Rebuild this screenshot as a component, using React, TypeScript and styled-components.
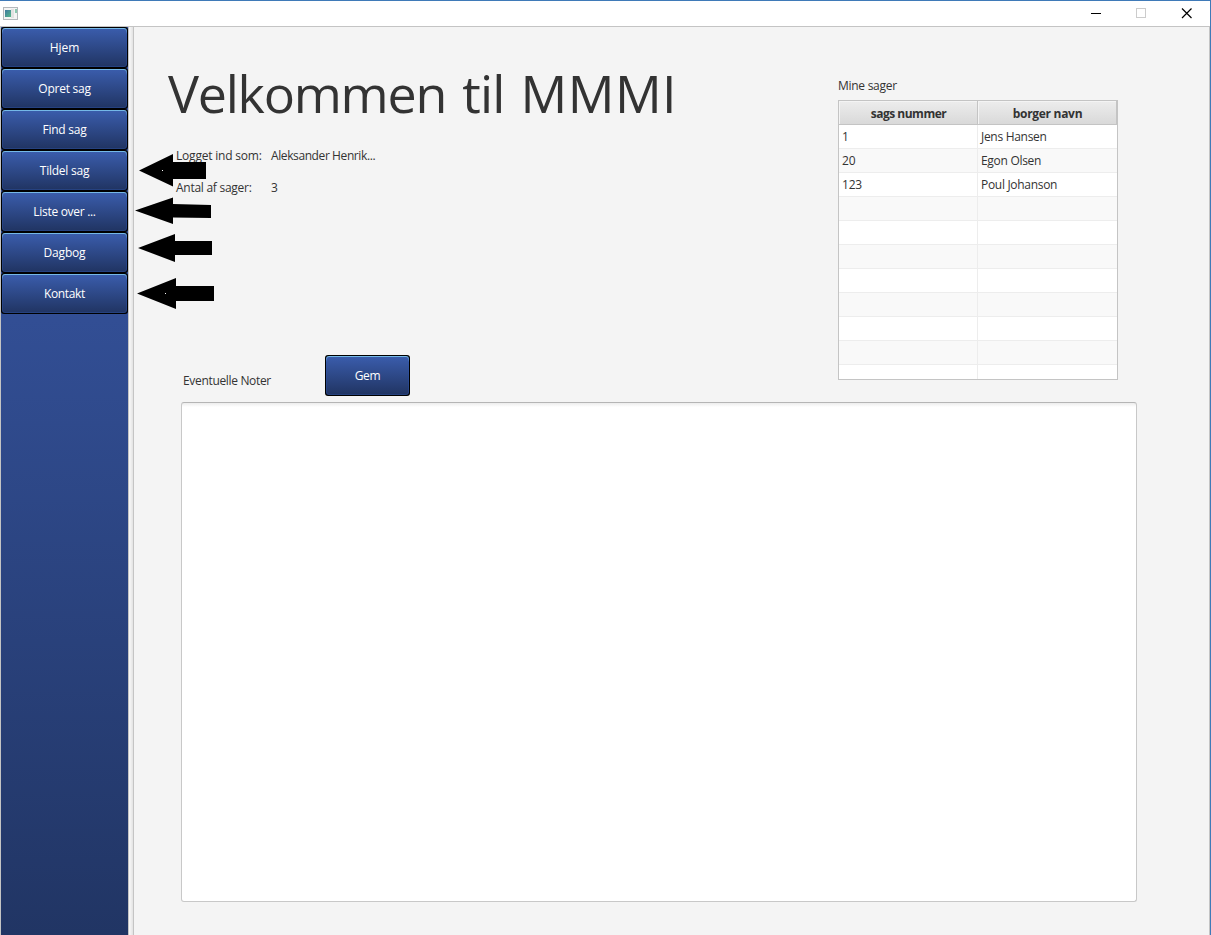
import React from "react";
import styled, { createGlobalStyle } from "styled-components";

const GlobalStyle = createGlobalStyle`
  * { box-sizing: border-box; }
  body { margin: 0; overflow: hidden; }
`;

const Window = styled.div`
  position: relative;
  width: 1211px;
  height: 935px;
  display: flex;
  flex-direction: column;
  background: #f4f4f4;
  border-top: 1px solid #3f7ab8;
  border-right: 1px solid #3f7ab8;
  font-family: "Open Sans", "Noto Sans", sans-serif;
  font-size: 12px;
  line-height: 16px;
  color: #333;
  white-space: nowrap;
  overflow: hidden;
`;

const TitleBar = styled.header`
  flex: none;
  height: 26px;
  display: flex;
  justify-content: space-between;
  background: #fff;
  border-bottom: 1px solid #c4c4c4;
`;

const AppIcon = styled.svg`
  margin: 5px 0 0 3px;
`;

const WindowControls = styled.div`
  display: flex;
`;

const ControlIcon = styled.svg`
  display: block;
  width: 46px;
  height: 25px;
`;

const Body = styled.div`
  flex: 1;
  display: flex;
  min-height: 0;
  border-left: 1px solid #c4c4c4;
  border-right: 1px solid #c4c4c4;
`;

const Sidebar = styled.nav`
  width: 127px;
  display: flex;
  flex-direction: column;
  background: linear-gradient(#3a5aab, #213564);
`;

const Splitter = styled.div`
  width: 6px;
  background: linear-gradient(90deg, #fafafa, #e2e2e2);
  border-left: 1px solid #c4c4c4;
  border-right: 1px solid #c4c4c4;
`;

const Button = styled.button<{ $width: number }>`
  flex: none;
  width: ${(p) => p.$width}px;
  height: 41px;
  padding: 1px;
  border: 0;
  border-radius: 3px;
  background: #000;
  font: inherit;
  color: #fff;
`;

const ButtonEdge = styled.span`
  display: block;
  height: 39px;
  padding: 1px;
  border-radius: 3px;
  background: linear-gradient(#7cc4ee 0, #5d93d2 2px, #3458a8 6px, #2a4a92 60%, #25417f);
`;

const ButtonFace = styled.span<{ $tracking: number }>`
  display: flex;
  align-items: center;
  justify-content: center;
  height: 37px;
  padding-top: 1px;
  border-radius: 2px;
  background: linear-gradient(#3a5cab, #213564);
  letter-spacing: ${(p) => p.$tracking}px;
`;

const Text = styled.span<{ $tracking?: number }>`
  letter-spacing: ${(p) => p.$tracking ?? -0.2}px;
`;

const Main = styled.main`
  flex: 1;
  padding: 41px 72px 0 34px;
`;

const Upper = styled.div`
  display: flex;
  justify-content: space-between;
  height: 334px;
`;

const Intro = styled.section`
  display: flex;
  flex-direction: column;
`;

const Title = styled.h1`
  margin: 0;
  font-size: 52px;
  font-weight: 400;
  line-height: 50px;
  letter-spacing: -0.9px;
  word-spacing: 3.6px;
`;

const Facts = styled.dl`
  margin: 30px 0 0 8px;
  display: grid;
  grid-template-columns: 95px auto;
  row-gap: 16px;
`;

const Term = styled.dt`
  margin: 0;
`;

const Value = styled.dd`
  margin: 0;
`;

const NotesBar = styled.div`
  margin: auto 0 6px 15px;
  display: flex;
  align-items: flex-start;
`;

const NotesLabel = styled.label`
  width: 142px;
  padding-top: 18px;
`;

const Cases = styled.section`
  width: 280px;
  margin: 10px 19px 0 0;
`;

const CaseTable = styled.div`
  height: 280px;
  margin-top: 6px;
  border: 1px solid #c4c4c4;
  background: #fff;
  overflow: hidden;
`;

const HeadRow = styled.div`
  display: flex;
  height: 24px;
  border-bottom: 1px solid #c4c4c4;
`;

const HeadCell = styled.div<{ $width: number }>`
  width: ${(p) => p.$width}px;
  padding: 1px 0 0 0;
  border: solid #f4f4f4;
  border-width: 1px 0 0 1px;
  box-shadow: 1px 0 #c4c4c4;
  margin-right: 1px;
  background: linear-gradient(#ececec, #d9d9d9);
  font-weight: 700;
  line-height: 22px;
  text-align: center;
`;

const Row = styled.div<{ $odd: boolean }>`
  display: flex;
  height: 24px;
  background: ${(p) => (p.$odd ? "#f9f9f9" : "#fff")};
  border-bottom: 1px solid #ededed;
`;

const Cell = styled.div<{ $width: number }>`
  width: ${(p) => p.$width}px;
  padding-left: 3px;
  line-height: 23px;
  border-right: 1px solid #ededed;
  &:last-child { border-right: 0; }
`;

const Notes = styled.textarea`
  display: block;
  width: 956px;
  height: 500px;
  margin-left: 13px;
  resize: none;
  outline: 0;
  border: 1px solid #c8c8c8;
  border-top-color: #b5b5b5;
  border-radius: 3px;
  background: linear-gradient(#ededed, #fff 4px);
`;

const Arrows = styled.svg`
  position: absolute;
  left: 134px;
  top: 149px;
  pointer-events: none;
`;

const menu: [string, number][] = [
  ["Hjem", -0.1],
  ["Opret sag", -0.25],
  ["Find sag", -0.25],
  ["Tildel sag", -0.25],
  ["Liste over ...", -0.3],
  ["Dagbog", -0.2],
  ["Kontakt", -0.35],
];

const cases: [string, string][] = [
  ["1", "Jens Hansen"],
  ["20", "Egon Olsen"],
  ["123", "Poul Johanson"],
  ...Array.from({ length: 8 }, (): [string, string] => ["", ""]),
];

function BlueButton({ label, width, tracking }: { label: string; width: number; tracking: number }) {
  return (
    <Button $width={width}>
      <ButtonEdge>
        <ButtonFace $tracking={tracking}>{label}</ButtonFace>
      </ButtonEdge>
    </Button>
  );
}

export default function App() {
  return (
    <Window>
      <GlobalStyle />
      <TitleBar>
        <AppIcon width="16" height="14" viewBox="0 0 16 14">
          <defs>
            <linearGradient id="screen" x1="0" y1="0" x2="1" y2="1">
              <stop offset="0" stopColor="#3f78a0" />
              <stop offset="1" stopColor="#55b98a" />
            </linearGradient>
          </defs>
          <rect x="0.5" y="1.5" width="14" height="12" fill="#f4f4f4" stroke="#b4b8bc" />
          <rect x="2" y="4" width="6" height="7" fill="url(#screen)" />
          <rect x="8" y="3" width="3" height="9" fill="#e2e2e2" />
          <rect x="12" y="3" width="2" height="4" fill="#8cc8b0" />
        </AppIcon>
        <WindowControls>
          <ControlIcon viewBox="0 0 46 25" shapeRendering="crispEdges">
            <rect x="19" y="12" width="10" height="1" fill="#000" />
          </ControlIcon>
          <ControlIcon viewBox="0 0 46 25" shapeRendering="crispEdges">
            <rect x="18.5" y="7.5" width="9" height="9" fill="none" stroke="#ccc" />
          </ControlIcon>
          <ControlIcon viewBox="0 0 46 25">
            <path d="M18 7.5l9.5 9.5M27.5 7.5L18 17" stroke="#000" strokeWidth="1.2" />
          </ControlIcon>
        </WindowControls>
      </TitleBar>
      <Body>
        <Sidebar>
          {menu.map(([label, tracking]) => (
            <BlueButton key={label} label={label} width={127} tracking={tracking} />
          ))}
        </Sidebar>
        <Splitter />
        <Main>
          <Upper>
            <Intro>
              <Title>
                <Text $tracking={-1.25}>Velkommen</Text> til <Text $tracking={0.4}>MMMI</Text>
              </Title>
              <Facts>
                <Term><Text>Logget ind som:</Text></Term>
                <Value><Text $tracking={-0.4}>Aleksander Henrik...</Text></Value>
                <Term><Text $tracking={-0.27}>Antal af sager:</Text></Term>
                <Value><Text>3</Text></Value>
              </Facts>
              <NotesBar>
                <NotesLabel><Text $tracking={-0.33}>Eventuelle Noter</Text></NotesLabel>
                <BlueButton label="Gem" width={85} tracking={-0.3} />
              </NotesBar>
            </Intro>
            <Cases>
              <Text $tracking={-0.28}>Mine sager</Text>
              <CaseTable>
                <HeadRow>
                  <HeadCell $width={138}><Text $tracking={-0.5}>sags nummer</Text></HeadCell>
                  <HeadCell $width={138}><Text $tracking={-0.3}>borger navn</Text></HeadCell>
                </HeadRow>
                {cases.map(([id, name], i) => (
                  <Row key={i} $odd={i % 2 === 1}>
                    <Cell $width={139}><Text>{id}</Text></Cell>
                    <Cell $width={139}><Text $tracking={-0.3}>{name}</Text></Cell>
                  </Row>
                ))}
              </CaseTable>
            </Cases>
          </Upper>
          <Notes />
        </Main>
      </Body>
      <Arrows width="84" height="164" viewBox="134 150 84 164">
        <path d="M139 170.5L173 154V162H206V179H173V186.5Z" />
        <path d="M135 210.5L173 197.5V204L211 205V218L173 217.5V224Z" />
        <path d="M138 248L175 234V241H212V255H175V262Z" />
        <path d="M137 293.5L176 278V286H214V301H176V309Z" />
        <rect x="162" y="170" width="1" height="1" fill="#fff" />
        <rect x="165" y="293" width="1" height="1" fill="#fff" />
      </Arrows>
    </Window>
  );
}
